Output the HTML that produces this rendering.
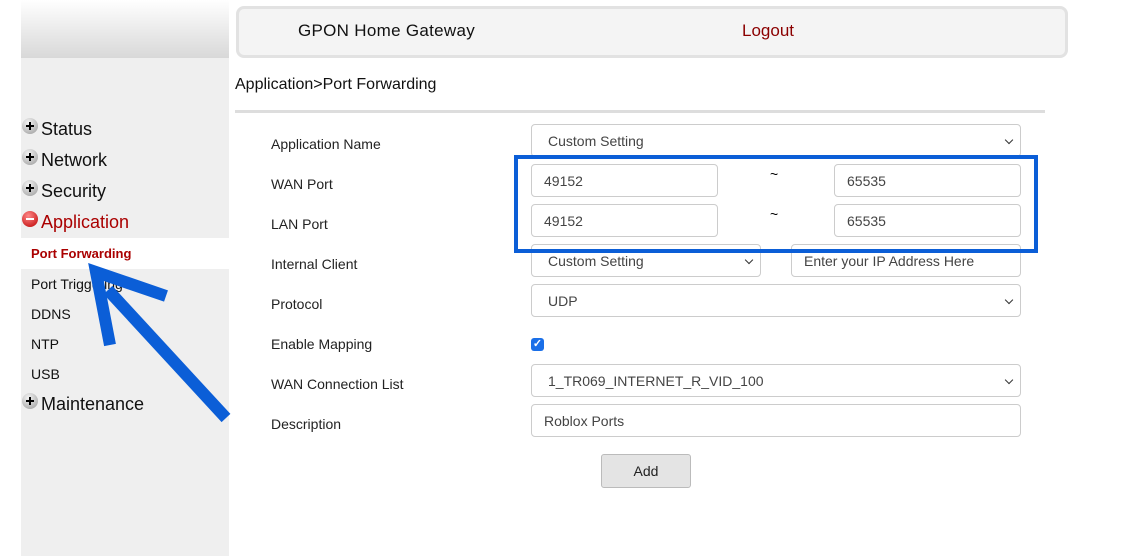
<!DOCTYPE html>
<html><head><meta charset="utf-8"><style>
*{box-sizing:border-box}
body{margin:0;width:1140px;height:556px;background:#fff;font-family:"Liberation Sans",Arial,sans-serif;position:relative;overflow:hidden}
.a{position:absolute}
.side{left:21px;top:0;width:208px;height:556px;background:#efefef}
.sideh{left:21px;top:0;width:208px;height:58px;background:linear-gradient(#ffffff,#d8d8d8)}
.m{left:22px;font-size:18px;color:#111;display:flex;align-items:center}
.ic{width:16px;height:16px;border-radius:50%;background:radial-gradient(circle at 40% 30%,#f4f4f4,#999);position:relative;margin-right:3px;margin-top:-8px;flex:none}
.ic:before{content:"";position:absolute;left:4px;top:7px;width:8px;height:2px;background:#000}
.ic.p:after{content:"";position:absolute;left:7px;top:4px;width:2px;height:8px;background:#000}
.ic.r{background:radial-gradient(circle at 40% 30%,#f88,#b00)}
.ic.r:before{background:#fff}
.s{left:31px;font-size:14px;color:#111}
.lbl{left:271px;font-size:14px;color:#222}
.f{border:1px solid #ccc;border-radius:4px;background:#fff;font-size:14px;color:#444;display:flex;align-items:center;padding-left:12px;height:33px}
.sel{padding-left:16px}
.sel:after{content:"";position:absolute;right:8px;top:12px;width:5px;height:5px;border-right:1.5px solid #333;border-bottom:1.5px solid #333;transform:rotate(45deg)}
</style></head><body>
<div class="a side"></div><div class="a sideh"></div>
<div class="a" style="left:236px;top:6px;width:832px;height:52px;background:#f4f4f4;border:3px solid #e2e2e2;border-radius:8px"></div>
<div class="a" style="left:298px;top:21px;font-size:17px;color:#111;letter-spacing:0.3px">GPON Home Gateway</div>
<div class="a" style="left:742px;top:21px;font-size:17px;color:#8b0000">Logout</div>
<div class="a" style="left:235px;top:76px;font-size:16px;color:#111">Application&gt;Port Forwarding</div>
<div class="a" style="left:235px;top:110px;width:810px;height:3px;background:#ddd"></div>

<div class="a m" style="top:119px"><span class="ic p"></span>Status</div>
<div class="a m" style="top:150px"><span class="ic p"></span>Network</div>
<div class="a m" style="top:181px"><span class="ic p"></span>Security</div>
<div class="a m" style="top:212px;color:#a00"><span class="ic r"></span>Application</div>
<div class="a" style="left:21px;top:238px;width:208px;height:31px;background:#fff"></div>
<div class="a s" style="top:246px;font-size:13px;font-weight:bold;color:#a00">Port Forwarding</div>
<div class="a s" style="top:276px">Port Triggering</div>
<div class="a s" style="top:306px">DDNS</div>
<div class="a s" style="top:336px">NTP</div>
<div class="a s" style="top:366px">USB</div>
<div class="a m" style="top:394px"><span class="ic p"></span>Maintenance</div>

<div class="a lbl" style="top:136px">Application Name</div>
<div class="a lbl" style="top:176px">WAN Port</div>
<div class="a lbl" style="top:216px">LAN Port</div>
<div class="a lbl" style="top:256px">Internal Client</div>
<div class="a lbl" style="top:296px">Protocol</div>
<div class="a lbl" style="top:336px">Enable Mapping</div>
<div class="a lbl" style="top:376px">WAN Connection List</div>
<div class="a lbl" style="top:416px">Description</div>

<div class="a f sel" style="left:531px;top:124px;width:490px">Custom Setting</div>
<div class="a f" style="left:531px;top:164px;width:187px">49152</div>
<div class="a" style="left:770px;top:166px;font-size:14px">~</div>
<div class="a f" style="left:834px;top:164px;width:187px">65535</div>
<div class="a f" style="left:531px;top:204px;width:187px">49152</div>
<div class="a" style="left:770px;top:206px;font-size:14px">~</div>
<div class="a f" style="left:834px;top:204px;width:187px">65535</div>
<div class="a f sel" style="left:531px;top:244px;width:230px">Custom Setting</div>
<div class="a f" style="left:791px;top:244px;width:230px">Enter your IP Address Here</div>
<div class="a f sel" style="left:531px;top:284px;width:490px">UDP</div>
<div class="a" style="left:531px;top:338px;width:13px;height:13px;background:#1a6fe8;border-radius:3px;color:#fff;font-size:11px;font-weight:bold;line-height:13px;text-align:center">✓</div>
<div class="a f sel" style="left:531px;top:364px;width:490px">1_TR069_INTERNET_R_VID_100</div>
<div class="a f" style="left:531px;top:404px;width:490px">Roblox Ports</div>
<div class="a" style="left:601px;top:454px;width:90px;height:34px;background:#e4e4e4;border:1px solid #bbb;border-radius:3px;font-size:14px;color:#222;display:flex;align-items:center;justify-content:center">Add</div>

<div class="a" style="left:514px;top:155px;width:524px;height:98px;border:4px solid #0b5ed7"></div>
<svg class="a" style="left:0;top:0" width="300" height="440">
<line x1="226" y1="418" x2="108" y2="290" stroke="#0b5ed7" stroke-width="12"/>
<polyline points="110,345 96,272 166,296" fill="none" stroke="#0b5ed7" stroke-width="12" stroke-linejoin="miter"/>
</svg>
</body></html>
